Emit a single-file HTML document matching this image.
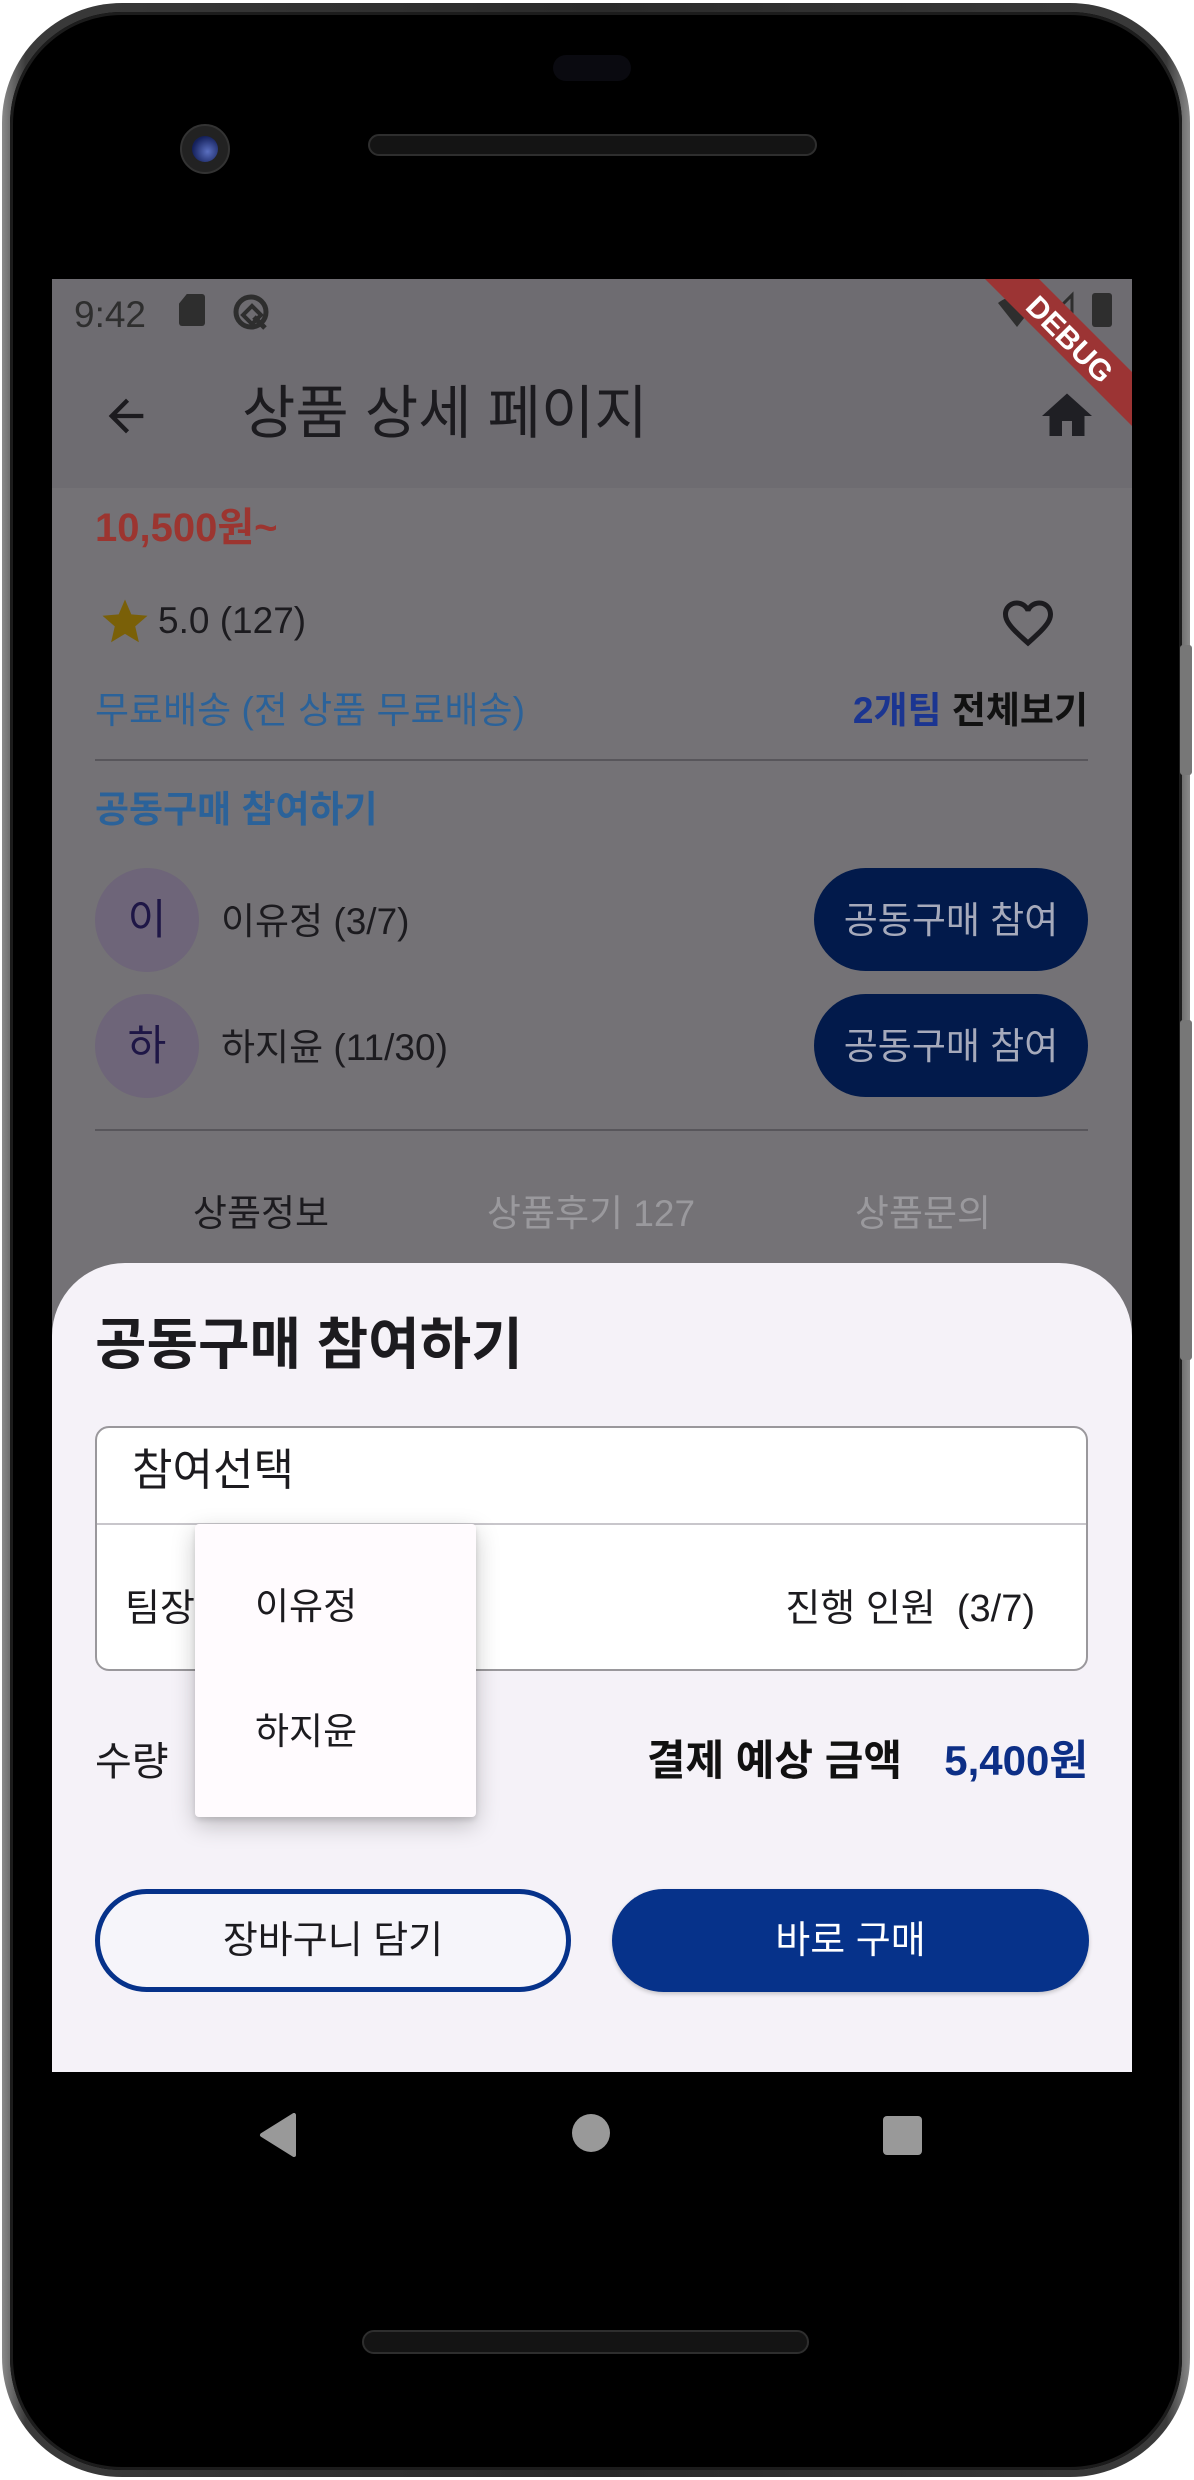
<!DOCTYPE html>
<html><head><meta charset="utf-8"><style>
*{margin:0;padding:0;box-sizing:border-box}
body{width:1194px;height:2480px;background:#fff;position:relative;overflow:hidden;font-family:"Liberation Sans","Noto Sans CJK KR",sans-serif}
.a{position:absolute}
.t{position:absolute;white-space:nowrap;line-height:1}
</style></head><body>
<!-- phone frame -->
<div class="a" style="left:2px;top:3px;width:1188px;height:2474px;border-radius:120px;background:linear-gradient(90deg,#8a8a8a,#3a3a3a 2%,#2a2a2a 50%,#3a3a3a 98%,#8a8a8a)"></div>
<div class="a" style="left:10px;top:12px;width:1172px;height:2458px;border-radius:112px;background:#000;box-shadow:inset 0 0 0 3px #1c1c1c"></div>
<div class="a" style="left:1180px;top:645px;width:12px;height:130px;background:#777;border-radius:3px"></div>
<div class="a" style="left:1180px;top:1020px;width:12px;height:340px;background:#777;border-radius:3px"></div>
<div class="a" style="left:553px;top:55px;width:78px;height:26px;border-radius:13px;background:#0a0a10"></div>
<div class="a" style="left:180px;top:124px;width:50px;height:50px;border-radius:50%;background:#222;border:2px solid #333"></div>
<div class="a" style="left:192px;top:136px;width:26px;height:26px;border-radius:50%;background:radial-gradient(circle at 60% 60%,#5a6fc0,#14205a 70%)"></div>
<div class="a" style="left:368px;top:134px;width:449px;height:22px;border-radius:11px;background:#141414;border:2px solid #2e2e2e"></div>
<div class="a" style="left:362px;top:2330px;width:447px;height:24px;border-radius:12px;background:#141414;border:2px solid #2e2e2e"></div>

<!-- screen -->
<div class="a" style="left:52px;top:279px;width:1080px;height:1793px;background:#747276;overflow:hidden">
  <div class="a" style="left:0;top:0;width:1080px;height:209px;background:#6e6c71"></div>
  <div class="t" style="left:22px;top:17px;font-size:37px;color:#2e2e2e">9:42</div>
  <div class="a" style="left:127px;top:15px;width:26px;height:32px;background:#2e2e2e;border-radius:3px;clip-path:polygon(30% 0,100% 0,100% 100%,0 100%,0 30%)"></div>
  <svg class="a" style="left:180px;top:14px" width="38" height="38" viewBox="0 0 38 38"><circle cx="19" cy="19" r="15" fill="none" stroke="#2e2e2e" stroke-width="5"/><path d="M11 22 L20 13 L29 22 L20 31Z" fill="none" stroke="#2e2e2e" stroke-width="4"/><path d="M22 24 L33 35" stroke="#2e2e2e" stroke-width="5"/></svg>
  <svg class="a" style="left:944px;top:12px" width="140" height="40"><path d="M2 12 A30 30 0 0 1 40 12 L21 36Z" fill="#2e2e2e"/><path d="M76 4 L76 34 L46 34Z" fill="none" stroke="#2e2e2e" stroke-width="3"/><rect x="96" y="2" width="20" height="34" rx="3" fill="#2e2e2e"/></svg>
  <svg class="a" style="left:0;top:0" width="1080" height="160"><polygon points="933,0 987,0 1080,93 1080,147" fill="#9c3434"/><text x="0" y="0" transform="translate(1016,62) rotate(45)" text-anchor="middle" dominant-baseline="middle" font-family="Liberation Sans" font-weight="bold" font-size="30" fill="#fff">DEBUG</text></svg>
  <!-- app bar -->
  <svg class="a" style="left:48px;top:111px" width="52" height="52" viewBox="0 0 24 24"><path d="M20 11H7.83l5.59-5.59L12 4l-8 8 8 8 1.41-1.41L7.83 13H20v-2z" fill="#1c1b1f"/></svg>
  <div class="t" style="left:190px;top:106px;font-size:58px;color:#1c1b1f">상품 상세 페이지</div>
  <svg class="a" style="left:985px;top:107px" width="60" height="60" viewBox="0 0 24 24"><path d="M10 20v-6h4v6h5v-8h3L12 3 2 12h3v8z" fill="#1f1f24"/></svg>
  <!-- content -->
  <div class="t" style="left:43px;top:229px;font-size:40px;font-weight:bold;color:#9c3530">10,500원~</div>
  <svg class="a" style="left:46px;top:316px" width="54" height="54" viewBox="0 0 24 24"><path d="M12 17.27L18.18 21l-1.64-7.03L22 9.24l-7.19-.61L12 2 9.19 8.63 2 9.24l5.46 4.73L5.82 21z" fill="#7a6008"/></svg>
  <div class="t" style="left:106px;top:323px;font-size:37px;color:#1c1b1f">5.0 (127)</div>
  <svg class="a" style="left:946px;top:314px" width="60" height="60" viewBox="0 0 24 24"><path d="M16.5 3c-1.74 0-3.41.81-4.5 2.09C10.91 3.81 9.24 3 7.5 3 4.42 3 2 5.420 2 8.5c0 3.78 3.4 6.86 8.55 11.54L12 21.35l1.45-1.32C18.6 15.36 22 12.28 22 8.5 22 5.42 19.58 3 16.5 3zm-4.4 15.55l-.1.1-.1-.1C7.14 14.240 4 11.39 4 8.5 4 6.5 5.5 5 7.5 5c1.54 0 3.04.99 3.570 2.36h1.87C13.46 5.99 14.96 5 16.5 5c2 0 3.5 1.5 3.5 3.5 0 2.89-3.14 5.74-7.9 10.05z" fill="#1c1b1f"/></svg>
  <div class="t" style="left:43px;top:413px;font-size:37px;color:#2b6299">무료배송 (전 상품 무료배송)</div>
  <div class="t" style="right:44px;top:413px;font-size:37px;font-weight:bold;color:#111"><span style="color:#1b3591">2개팀</span> 전체보기</div>
  <div class="a" style="left:43px;top:480px;width:993px;height:2px;background:#58565b"></div>
  <div class="t" style="left:43px;top:512px;font-size:37px;font-weight:bold;color:#2b6299">공동구매 참여하기</div>
  <div class="a" style="left:43px;top:589px;width:104px;height:104px;border-radius:50%;background:#6e6579"></div>
  <div class="t" style="left:43px;top:620px;width:104px;text-align:center;font-size:42px;color:#1e1646">이</div>
  <div class="t" style="left:169px;top:624px;font-size:37px;color:#1c1b1f">이유정 (3/7)</div>
  <div class="a" style="left:762px;top:589px;width:274px;height:103px;border-radius:52px;background:#021a4b"></div>
  <div class="t" style="left:762px;top:623px;width:274px;text-align:center;font-size:37px;color:#a6aabb">공동구매 참여</div>
  <div class="a" style="left:43px;top:715px;width:104px;height:104px;border-radius:50%;background:#6e6579"></div>
  <div class="t" style="left:43px;top:746px;width:104px;text-align:center;font-size:42px;color:#1e1646">하</div>
  <div class="t" style="left:169px;top:750px;font-size:37px;color:#1c1b1f">하지윤 (11/30)</div>
  <div class="a" style="left:762px;top:715px;width:274px;height:103px;border-radius:52px;background:#021a4b"></div>
  <div class="t" style="left:762px;top:749px;width:274px;text-align:center;font-size:37px;color:#a6aabb">공동구매 참여</div>
  <div class="a" style="left:43px;top:850px;width:993px;height:2px;background:#58565b"></div>
  <div class="t" style="left:109px;top:916px;width:200px;text-align:center;font-size:37px;color:#1c1b1f">상품정보</div>
  <div class="t" style="left:409px;top:916px;width:260px;text-align:center;font-size:37px;color:#9a999d">상품후기 127</div>
  <div class="t" style="left:771px;top:916px;width:200px;text-align:center;font-size:37px;color:#9a999d">상품문의</div>
  <!-- sheet -->
  <div class="a" style="left:0;top:984px;width:1080px;height:820px;border-radius:73px 73px 0 0;background:#f5f2f8"></div>
  <div class="t" style="left:43px;top:1038px;font-size:56px;font-weight:bold;color:#1c1b1f">공동구매 참여하기</div>
  <div class="a" style="left:43px;top:1147px;width:993px;height:245px;border-radius:14px;border:2px solid #9a989c;background:#fff"></div>
  <div class="a" style="left:45px;top:1244px;width:989px;height:2px;background:#c8c6cb"></div>
  <div class="t" style="left:80px;top:1170px;font-size:44px;color:#1c1b1f">참여선택</div>
  <div class="t" style="left:73px;top:1311px;font-size:38px;color:#1c1b1f">팀장</div>
  <div class="t" style="right:97px;top:1311px;font-size:38px;color:#1c1b1f">진행 인원 &nbsp;(3/7)</div>
  <div class="t" style="left:43px;top:1463px;font-size:40px;color:#1c1b1f">수량</div>
  <div class="t" style="right:230px;top:1461px;font-size:42px;font-weight:bold;color:#111">결제 예상 금액</div>
  <div class="t" style="right:44px;top:1461px;font-size:42px;font-weight:bold;color:#0d2f86">5,400원</div>
  <div class="a" style="left:143px;top:1245px;width:281px;height:293px;border-radius:4px;background:#fffbfe;box-shadow:0 8px 24px rgba(0,0,0,.22),0 3px 6px rgba(0,0,0,.12)"></div>
  <div class="t" style="left:203px;top:1309px;font-size:37px;color:#1c1b1f">이유정</div>
  <div class="t" style="left:203px;top:1434px;font-size:37px;color:#1c1b1f">하지윤</div>
  <div class="a" style="left:43px;top:1610px;width:476px;height:103px;border-radius:52px;border:5px solid #06328a;background:#f6f5fa"></div>
  <div class="t" style="left:43px;top:1643px;width:476px;text-align:center;font-size:38px;color:#1c1b1f">장바구니 담기</div>
  <div class="a" style="left:560px;top:1610px;width:477px;height:103px;border-radius:52px;background:#06328a;box-shadow:0 2px 4px rgba(0,0,0,.2)"></div>
  <div class="t" style="left:560px;top:1643px;width:477px;text-align:center;font-size:38px;color:#fff">바로 구매</div>
</div>
<!-- nav -->
<svg class="a" style="left:258px;top:2113px" width="40" height="44"><path d="M36 2 L36 42 L4 22Z" fill="#999" stroke="#999" stroke-width="4" stroke-linejoin="round"/></svg>
<div class="a" style="left:572px;top:2114px;width:38px;height:38px;border-radius:50%;background:#999"></div>
<div class="a" style="left:883px;top:2116px;width:39px;height:39px;border-radius:4px;background:#999"></div>
</body></html>
